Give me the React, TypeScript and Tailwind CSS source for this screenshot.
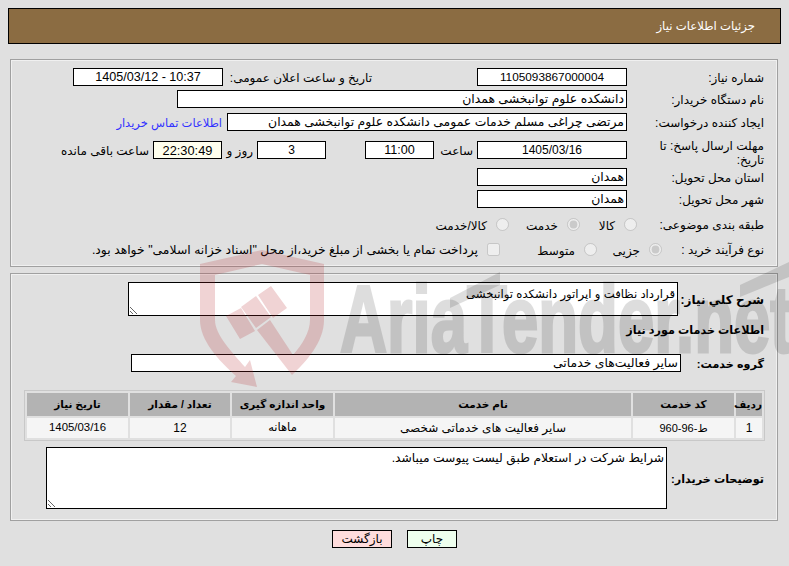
import React from "react";

const font = "font-['Liberation_Sans','DejaVu_Sans',sans-serif]";

function Field({ className = "", center, yellow, children }: { className?: string; center?: boolean; yellow?: boolean; children?: React.ReactNode }) {
    return (
        <div className={`h-[18px] shrink-0 border border-black px-[2px] leading-[17px] text-black whitespace-nowrap overflow-hidden ${yellow ? "bg-[#ffffee]" : "bg-white"} ${center ? "text-center" : "text-right"} ${className}`}>
            {children}
        </div>
    );
}

function Label({ className = "", children }: { className?: string; children: React.ReactNode }) {
    return <div className={`shrink-0 pt-[1px] leading-[14px] text-black whitespace-nowrap ${className}`}>{children}</div>;
}

function Radio({ className, label, checked }: { className: string; label: string; checked?: boolean }) {
    return (
        <label className={`flex shrink-0 items-center gap-[9px] text-black ${className}`}>
            <input type="radio" disabled checked={!!checked} readOnly className="m-0 h-[13px] w-[13px]" />
            <span className="pt-[3px]">{label}</span>
        </label>
    );
}

function Watermark() {
    return (
        <svg className="pointer-events-none absolute left-0 top-0 h-[566px] w-[789px]" viewBox="0 0 789 566">
            {/* shield with handle and arrow */}
            <path
                d="M262 250 L324 264 V320 C324 342 306 362 292 375 L257 330 L270 320 L293 355 C302 345 310 332 310 320 V275 L262 264 L215 275 V320 C215 335 232 352 245 367 L250 360 L257 387 L231 382 L236 376 C218 360 200 340 200 320 V264 Z"
                fill="#b4222a"
                opacity="0.2"
            />
            {/* gavel head */}
            <path d="M226 316 L241 308 L255 331 L240 339 Z M241 307 L256 296 L271 317 L256 328 Z M258 295 L271 286 L287 308 L273 318 Z" fill="#b4222a" opacity="0.2" />
            {/* wordmark */}
            <text direction="ltr" textAnchor="start" x="340" y="352" fontFamily="'Liberation Sans', sans-serif" fontWeight="700" fontSize="95" textLength="452" lengthAdjust="spacingAndGlyphs" fill="#000" stroke="#000" strokeWidth="3" opacity="0.13">
                AriaTender.net
            </text>
            <path d="M450 298 L500 272 V285 L450 308 Z" fill="#000" opacity="0.13" />
            <path d="M740 297 L789 277 V262 L740 285 Z" fill="#000" opacity="0.13" />
        </svg>
    );
}

export default function App() {
    return (
        <div dir="rtl" className={`relative h-[566px] w-[789px] overflow-hidden bg-[#e0e0e0] pt-[8px] text-[12px] ${font}`}>
            <div className="mx-[8px] flex h-[36px] items-center border border-black bg-[#8b6c42] pr-[25px] text-[11.7px] text-white">
                جزئیات اطلاعات نیاز
            </div>

            {/* top panel */}
            <section className="ml-[10px] mr-[11px] mt-[15px] h-[208px] border border-[#a0a0a0] pr-[13px] pt-[8px] shadow-[inset_0_0_0_1px_#f0f0f0]">
                <div className="flex items-center">
                    <Label className="w-[137px]">شماره نیاز:</Label>
                    <Field className="w-[150px] text-[11.8px]" center>1105093867000004</Field>
                    <Label className="mr-[105px] w-[149px]">تاریخ و ساعت اعلان عمومی:</Label>
                    <Field className="w-[150px] text-[12.6px]" center>10:37 - 1405/03/12</Field>
                </div>
                <div className="mt-[4px] flex items-center">
                    <Label className="w-[137px]">نام دستگاه خریدار:</Label>
                    <Field className="w-[450px] text-[12.4px]">دانشکده علوم توانبخشی همدان</Field>
                </div>
                <div className="mt-[4px] flex items-center">
                    <Label className="w-[137px]">ایجاد کننده درخواست:</Label>
                    <Field className="w-[400px] text-[12.4px]">مرتضی چراغی مسلم خدمات عمومی دانشکده علوم توانبخشی همدان</Field>
                    <a className="mr-[5px] pt-[3px] text-[11.5px] text-[#3333ff]" href="#">اطلاعات تماس خریدار</a>
                </div>
                <div className="mt-[9px] flex h-[18px] items-start">
                    <Label className="-mt-[3px] w-[137px]">مهلت ارسال پاسخ: تا<br />تاریخ:</Label>
                    <Field className="w-[150px]" center>1405/03/16</Field>
                    <Label className="mt-[2px] w-[43px] pr-[4px]">ساعت</Label>
                    <Field className="w-[69px] text-[12.6px]" center>11:00</Field>
                    <div className="w-[39px] shrink-0" />
                    <Field className="w-[69px]" center>3</Field>
                    <Label className="mt-[2px] w-[35px] pr-[4px]">روز و</Label>
                    <Field className="w-[69px] text-[12.8px]" center yellow>22:30:49</Field>
                    <Label className="mt-[2px] pr-[4px]">ساعت باقی مانده</Label>
                </div>
                <div className="mt-[9px] flex items-center">
                    <Label className="w-[137px]">استان محل تحویل:</Label>
                    <Field className="w-[150px] text-[12.4px]">همدان</Field>
                </div>
                <div className="mt-[4px] flex items-center">
                    <Label className="w-[137px]">شهر محل تحویل:</Label>
                    <Field className="w-[150px] text-[12.4px]">همدان</Field>
                </div>
                <div className="mt-[9px] flex h-[14px] items-center">
                    <Label className="w-[127px]">طبقه بندی موضوعی:</Label>
                    <Radio className="w-[57px]" label="کالا" />
                    <Radio className="w-[71px]" label="خدمت" checked />
                    <Radio className="w-[80px]" label="کالا/خدمت" />
                </div>
                <div className="mt-[11px] flex h-[14px] items-center">
                    <Label className="w-[102px]">نوع فرآیند خرید :</Label>
                    <Radio className="w-[65px]" label="جزیی" checked />
                    <Radio className="w-[97px]" label="متوسط" />
                    <label className="flex items-center gap-[9px] text-[12.4px] text-black">
                        <input type="checkbox" disabled className="m-0 h-[13px] w-[13px]" />
                        <span className="pt-[2px]">پرداخت تمام یا بخشی از مبلغ خرید،از محل "اسناد خزانه اسلامی" خواهد بود.</span>
                    </label>
                </div>
            </section>

            {/* bottom panel */}
            <section className="ml-[10px] mr-[11px] mt-[6px] h-[248px] border border-[#a0a0a0] pr-[13px] pt-[8px] shadow-[inset_0_0_0_1px_#f0f0f0]">
                <div className="flex items-center">
                    <Label className="w-[86px] font-bold">شرح کلي نیاز:</Label>
                    <textarea readOnly defaultValue="قرارداد نظافت و اپراتور دانشکده توانبخشی" className="h-[34px] w-[550px] rounded-none border border-black bg-white px-[2px] pt-[3px] text-[11.7px] leading-[15px] text-black outline-none" />
                </div>
                <div className="mt-[6px] h-[17px] text-[11.2px] font-bold leading-[17px] text-black">اطلاعات خدمات مورد نیاز</div>
                <div className="mt-[15px] flex items-center">
                    <Label className="w-[83px] text-[11.2px] font-bold">گروه خدمت:</Label>
                    <Field className="w-[550px] text-[12.4px]">سایر فعالیت‌های خدماتی</Field>
                </div>

                <table className="-mr-[1px] mt-[18px] w-[741px] table-fixed border-separate border-spacing-[2px] border border-[#c8c8c8] text-black">
                    <thead className="text-[10.5px]">
                        <tr className="h-[23px] bg-[#b3b3b3]">
                            <th className="w-[26px] p-0">ردیف</th>
                            <th className="w-[101px] p-0">کد خدمت</th>
                            <th className="w-[296px] p-0">نام خدمت</th>
                            <th className="w-[101px] p-0">واحد اندازه گیری</th>
                            <th className="w-[100px] p-0">تعداد / مقدار</th>
                            <th className="w-[101px] p-0">تاریخ نیاز</th>
                        </tr>
                    </thead>
                    <tbody>
                        <tr className="h-[20px] bg-[#f5f5f5] text-center">
                            <td className="p-0">1</td>
                            <td className="p-0 text-[11px]">ط-96-960</td>
                            <td className="p-0">سایر فعالیت های خدماتی شخصی</td>
                            <td className="p-0 text-[11.5px]">ماهانه</td>
                            <td className="p-0">12</td>
                            <td className="p-0 text-[11.4px]">1405/03/16</td>
                        </tr>
                    </tbody>
                </table>

                <div className="mt-[6px] flex items-center">
                    <Label className="w-[97px] text-[11.2px] font-bold">توضیحات خریدار:</Label>
                    <textarea readOnly defaultValue="شرایط شرکت در استعلام طبق لیست پیوست میباشد." className="h-[62px] w-[621px] rounded-none border border-black bg-white px-[2px] pt-[3px] text-[12.3px] leading-[15px] text-black outline-none" />
                </div>
            </section>

            <div className="mt-[9px] flex justify-center gap-[15px]">
                <button className="h-[18px] w-[50px] border border-black bg-[#eeffee] leading-[16px] text-black">چاپ</button>
                <button className="h-[18px] w-[60px] border border-black bg-[#ffdddd] leading-[16px] text-black">بازگشت</button>
            </div>

            <Watermark />
        </div>
    );
}
